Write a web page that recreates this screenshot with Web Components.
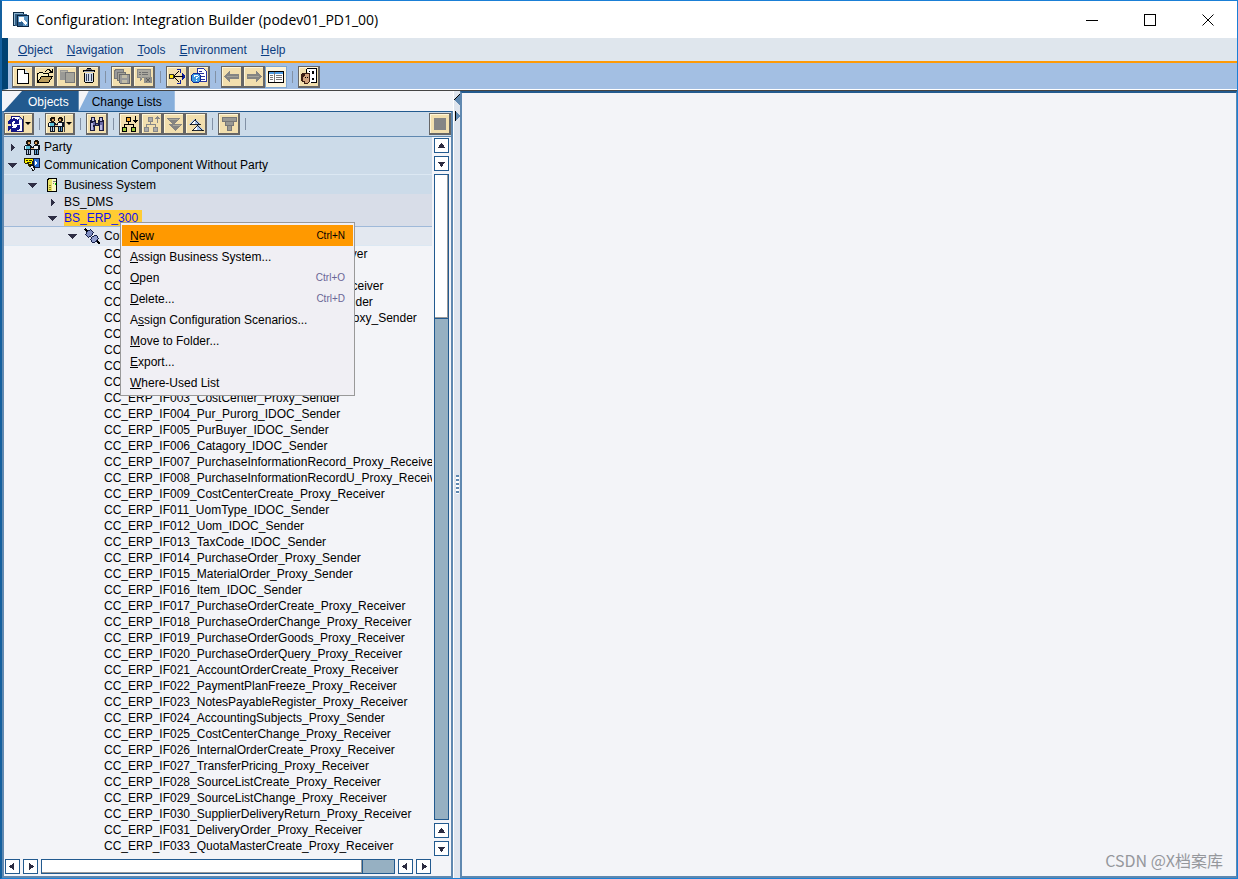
<!DOCTYPE html>
<html lang="en">
<head>
<meta charset="utf-8">
<title>Configuration: Integration Builder (podev01_PD1_00)</title>
<style>
  html, body { margin: 0; height: 100%; }
  body {
    font: 12px/16px "Liberation Sans", Arial, sans-serif;
    color: #000;
    --ink: #225a8f;
    --slate: #5f88b0;
    --pane: #f3f4f8;
    --band: #ccdbe9;
  }
</style>
</head>
<body>
<builder-window></builder-window>

<script>
/* ---------- icons, drawn on a 16 x 16 grid ---------- */
const PEOPLE = `<path d="M3 1h4v4H6v1H3V5H2V2h1zM11 1h3v1h1v3h-1v1h-3V5h-1V2h1z" fill="#1a1208"/>
  <path d="M4 3h2v2H4zM11 3h2v2h-2z" fill="#d79a5c"/>
  <path d="M1 6h6l1 2 2-2h5l1 1v4h-1v5h-5v-5H7v5H2v-5H0V7z" fill="#0c1420"/>
  <path d="M2 7h4v3H2z" fill="#5cc0d8"/><path d="M1 7h1v3H1zM10 7h4v3h-4z" fill="#eef3f6"/><path d="M7 9h3v1H7z" fill="#e0b080"/>
  <path d="M3 11h1v4H3zM5 11h1v4H5z" fill="#b9c8dc"/><path d="M11 11h1v4h-1zM13 11h1v4h-1z" fill="#5c9fd0"/>`;
const ICONS = {
  app: `<path d="M0 0h11v14H0z" fill="#0d2c48"/><path d="M1 1h9v1H1zM1 1h1v12H1z" fill="#8fb4cf"/><path d="M2 2h12v12H2z" fill="#325f86"/><path d="M4 3h12v12H4z" fill="#0b2440"/>
    <path d="M5 4h10v10H5z" fill="#5f97c4"/><path d="M5 10h5v4H5z" fill="#2d5f8e"/><path d="M6 5h5v1L10 7l4 4-2 2-4-4-1 1H6z" fill="#fff"/>`,
  new: `<path d="M2.500 1.500h7l4 4v10h-11z" fill="#fff" stroke="#000"/><path d="M9.500 1.500v4h4" fill="#d8e4f0" stroke="#000"/>`,
  open: `<path d="M.5 14.500v-9h1l1-1h3l1 1h5v3" fill="#f9f0c0" stroke="#000"/><path d="M.5 14.500l4-6h11l-4 6z" fill="#b99b5b" stroke="#000"/>
    <path d="M8 3h1V2h1V1h3v1h1v1h1V1h1v4h-4V4h1V3h-1V2h-2v1H9v1H8z" fill="#000"/>`,
  copy: `<path d="M1 2h8v10H1z" fill="#9a9a96"/><path d="M6.500 4.500h9v10h-9z" fill="#a4a39b" stroke="#777"/><path d="M2 3h6v1H2z" fill="#b8b5a8"/>`,
  trash: `<path d="M6 0h4v1H6zM2 2h12v2H2zM3 5h10v9h-1v1H4v-1H3z" fill="#000"/><path d="M4 5h8v9H4z" fill="#d3dcec"/>
    <path d="M5 6h1v7H5zM7 6h1v7H7zM10 6h1v7h-1z" fill="#33405c"/><path d="M5 1h6v1H5z" fill="#667"/><path d="M3 3h10v1H3z" fill="#8c96aa"/>`,
  saveall: `<path d="M.5 2.500l2-1h7v9h-9z" fill="#999" stroke="#777"/><path d="M3.500 4.500h8v8h-8z" fill="#a5a39a" stroke="#737373"/>
    <path d="M5.500 6.500h10v9h-9l-1-1z" fill="#999" stroke="#6a6a6a"/><path d="M8 7h5v3H8zM8 12h5v3H8z" fill="#c2bca6"/>`,
  activate: `<path d="M1.500 1.500h13v8h-8l-2 3v-3h-3z" fill="#aaa89f" stroke="#8a8a86"/><path d="M3 4h2v1H3zM6 4h6v1H6zM3 6h2v1H3zM6 6h6v1H6z" fill="#6f6f6f"/>
    <path d="M8 9h8v6H8z" fill="#8e8e8a"/><path d="M10 10l4 4m0-4l-4 4" stroke="#5f5f5f"/>`,
  flow: `<path d="M.5 6.500h4v4h-4z" fill="#ffe80a" stroke="#333"/><path d="M5 8.500h9M5 8l5-5M5 9l5 5" stroke="#000" fill="none"/>
    <path d="M8 1h4v4h-1V2H8zM8 16h4v-4h-1v3H8z" fill="#0b1d9b"/><path d="M13 5h1v1h1v1h1v3h-1v1h-1v1h-1V9h1V8h-1z" fill="#0b1d9b"/>`,
  help: `<path d="M6.500.5h6l3 3v10h-9z" fill="#fff" stroke="#2633a0"/><path d="M8 3h3v1H8zM8 5h5v1H8zM10 8h4v1h-4zM10 11h4v1h-4z" fill="#2633a0"/>
    <circle cx="5" cy="10" r="5" fill="#3f9ae0" stroke="#0c2a96"/><path d="M3 9V8l1-1h2l1 1v1L5 10v1M5 12v1" stroke="#fff" fill="none"/>`,
  back: `<path d="M0 8.500L6 2v4h9v5H6v4z" fill="#858583"/><path d="M3 8h11" stroke="#a5a39a"/>`,
  forward: `<path d="M16 8.500L10 2v4H1v5h9v4z" fill="#858583"/><path d="M2 8h11" stroke="#a5a39a"/>`,
  layout: `<path d="M.5 2.500h15v11H.5z" fill="#fff" stroke="#000"/><path d="M1 3h14v2H1z" fill="#4d9ce4"/><path d="M6 3h1v10H6z" fill="#777"/>
    <path d="M2 6h3v1H2zM2 8h3v1H2zM2 10h3v1H2zM8 6h6v1H8zM8 8h6v1H8zM8 10h6v1H8z" fill="#777"/>`,
  person: `<path d="M5.500.5h10v14h-6" fill="#fff" stroke="#000"/><path d="M5.500.5v4" stroke="#000"/><path d="M11 3h2v3h-2zM11 10h2v2h-2zM8 3h1v1H8z" fill="#000"/>
    <path d="M1 5h7l1 1v7l-2 3H3v-2H1l-1-2V7z" fill="#3b1d12"/><path d="M3 8h1V6h4v7l-2 2H4v-2H2V9h1z" fill="#d2a27c"/><path d="M4 9h1v1H4zM6 9h1v1H6z" fill="#000"/>`,
  refresh: `<path d="M4.500.5h8l3 3v12h-11z" fill="#fff" stroke="#15157a"/><path d="M12 1v3h3z" fill="#9db4dc"/>
    <path d="M2 8a5 5 0 0 1 8-3M12 9a5 5 0 0 1-8 4" stroke="#15158a" stroke-width="3" fill="none"/><path d="M12 3v5H6zM1 15v-5h6z" fill="#15158a"/>`,
  people: PEOPLE,
  find: `<path d="M2 1h4v3h1v3h2V4h1V1h4v3h1v11h-5v-5H6v5H1V4h1z" fill="#1b1a3c"/><path d="M3 2h2v3H3zM11 2h2v3h-2zM2 7h2v7H2zM11 9h2v5h-2z" fill="#b9b9e2"/><path d="M4 6h2v3H4zM11 6h3v3h-3zM4 11h1v3H4zM13 9h1v5h-1zM7 8h2v1H7z" fill="#6869a5"/>`,
  expand: `<path d="M4.500 1.500h4v4h-4z" fill="#f5a623" stroke="#000"/><path d="M13 0h1v4h2v1h-1v1h-1v1h-1V6h-1V5h-1V4h2z" fill="#000"/><path d="M6.500 6v2.500M2.500 11V8.500h9V11" stroke="#000" fill="none"/>
    <path d="M.5 11.500h4v4h-4zM9.500 11.500h4v4h-4z" fill="#9ccf3d" stroke="#000"/>`,
  collapse: `<path d="M4.500 1.500h4v4h-4z" fill="#aaa" stroke="#888"/><path d="M13 7h1V3h2V2h-1V1h-1V0h-1v1h-1v1h-1v1h2z" fill="#888"/><path d="M6.500 6v2.500M2.500 11V8.500h9V11" stroke="#888" fill="none"/>
    <path d="M.5 11.500h4v4h-4zM9.500 11.500h4v4h-4z" fill="#aaa" stroke="#888"/>`,
  down: `<path d="M1 2h13L7.500 9zM3 8h13L9.500 15z" fill="#858583"/><path d="M3 3h9M7 9h7" stroke="#aaa89c"/>`,
  up: `<path d="M1.500 8.500h11L7 2.500zM3.500 14.500h12L9.500 8.500z" fill="#a9c5ee" stroke="#000" stroke-width=".8"/><path d="M7 4L3 8h4zM9 10l-4 4h4z" fill="#fff"/>`,
  filter: `<path d="M1.500 1.500h14v4h-14zM4.500 5.500h8v4h-8zM6.500 9.500h4v5h-4z" fill="#999994" stroke="#777"/>`,
  stop: `<path d="M2 2h12v12H2z" fill="#858585"/>`,
  channel: `<path d="M0 1h9v7H6v2H5V9H4V7H1V6H0z" fill="#2a2600"/><path d="M1 2h8v5H5L4 6H1z" fill="#fbf200"/><path d="M2 3h2v1H2zM5 3h3v1H5zM3 5h4v1H3z" fill="#2a2600"/>
    <path d="M9 1h7v10h-4l-2-1H8V4h1z" fill="#101a40"/><path d="M10 2h5v8h-5z" fill="#2d6fd0"/><path d="M11 4l3 2-3 2z" fill="#fff"/>
    <path d="M6 8h3l2 2v3h-1v1H8v-2H7z" fill="#111"/><path d="M7 9h2v2h1v2H9v-1H8z" fill="#e8ecf8"/>`,
  system: `<path d="M3.500 2.500l2-1h7v13h-9z" fill="#e9e36c" stroke="#000"/><path d="M8 2h4v12H8z" fill="#fbf9c4"/><path d="M9 4h3v1H9zM9 6h1v1H9z" fill="#777"/><path d="M11 6h1v2h-1z" fill="#0c0"/><path d="M5 8h2v1H5zM5 10h2v1H5zM5 12h2v1H5z" fill="#8a8420"/>`,
  plug: `<path d="M1 1l3 3M12 12l4 4" stroke="#000" stroke-width="1.500"/><ellipse cx="5.500" cy="5.500" rx="4" ry="3" transform="rotate(-45 5.500 5.500)" fill="#7f8dc0" stroke="#15204a"/>
    <ellipse cx="10.500" cy="11" rx="4" ry="3" transform="rotate(-45 10.500 11)" fill="#93a0cf" stroke="#15204a"/><path d="M7 9l3-3" stroke="#fff"/>`,
  min: `<path d="M2 8h12v1H2z" fill="#000"/>`,
  max: `<path d="M2.500 2.500h11v11h-11z" fill="none" stroke="#000"/>`,
  close: `<path d="M2.500 2.500l11 11m0-11l-11 11" fill="none" stroke="#000" shape-rendering="auto"/>`,
  aup: `<path d="M8 5l5 6H3z" fill="#2b2b40"/>`,
  adown: `<path d="M8 12L3 6h10z" fill="#2b2b40"/>`,
  aleft: `<path d="M4 8l6-5v10z" fill="#2b2b40"/>`,
  aright: `<path d="M12 8L6 3v10z" fill="#2b2b40"/>`,
  topen: `<path d="M4 6h9L8.500 11z" fill="#2e2e44"/>`,
  tclosed: `<path d="M7 4l4 4.500L7 13z" fill="#2e2e44"/>`,
};

const define = (name, html, setup) =>
  customElements.define(name, class extends HTMLElement {
    constructor() {
      super();
      this.attachShadow({ mode: "open" });
    }
    connectedCallback() {
      this.shadowRoot.innerHTML = typeof html === "function" ? html(this) : html;
      if (setup) setup(this);
    }
  });

define("app-icon", el => `
  <style>:host{display:block;flex:none;width:16px;height:16px} svg{display:block;width:100%;height:100%;shape-rendering:crispEdges}</style>
  <svg viewBox="0 0 16 16" fill="none" aria-hidden="true">${ICONS[el.getAttribute("name")]}</svg>`);

/* Raised sand-coloured toolbar button; "menu" adds a drop-down arrow, "on" shows it pressed. */
define("tool-button", el => `
  <style>
    :host{display:block;flex:none}
    button{box-sizing:border-box;display:flex;align-items:center;height:22px;padding:0 1px 0 2px;margin:0;
      border:2px solid #666;border-width:1px 2px 2px 1px;background:#f2dfae;box-shadow:inset 1px 1px #fff6d8}
    :host([on]) button{border:1px solid #7ea6d0;padding:0 2px;background:#fbf3dc}
    i{width:8px;height:16px;display:flex;align-items:center;justify-content:center;border-left:1px solid #444;box-sizing:border-box}
    i::after{content:"";border:3px solid transparent;border-top-color:#000;border-bottom:0}
  </style>
  <button type="button" aria-label="${el.getAttribute("label")}"><app-icon name="${el.getAttribute("icon")}"></app-icon>${el.hasAttribute("menu") ? "<i></i>" : ""}</button>`);
define("tool-gap", `<style>:host{display:flex;flex:none;width:11px;justify-content:center} i{width:1px;height:12px;background:#8291a5}</style><i></i>`);
define("tool-strip", `<style>:host{display:flex;align-items:center}</style><slot></slot>`);

define("title-bar", `
  <style>
    :host{display:flex;align-items:center;height:37px;padding:0 21px 0 11px;background:#fff;gap:7px}
    h1{flex:1;margin:0;font:14px/20px "Open Sans","Noto Sans",sans-serif;white-space:nowrap}
    nav{display:flex;gap:42px} button{display:block;border:0;background:none;padding:0}
  </style>
  <app-icon name="app"></app-icon><h1><slot></slot></h1>
  <nav><button aria-label="Minimize"><app-icon name="min"></app-icon></button><button aria-label="Maximize"><app-icon name="max"></app-icon></button><button aria-label="Close"><app-icon name="close"></app-icon></button></nav>`);

define("menu-bar", `
  <style>:host{display:flex;align-items:center;gap:14px;height:23px;padding-left:10px;background:#dfe6ed;color:#0b3c80}</style><slot></slot>`);
define("menu-title", `
  <style>button{font:inherit;color:inherit;border:0;background:none;padding:0;display:block}</style><button type="button"><slot></slot></button>`);

define("pane-tab", el => `
  <style>
    :host{display:block;height:20px;--cut:10px;background:#86aedb;clip-path:polygon(var(--cut) 0,100% 0,100% 100%,0 100%)}
    :host([active]){--cut:18px;background:var(--ink);color:#fff}
    button{display:block;font:inherit;color:inherit;border:0;background:none;height:20px;padding:2px 13px 0}
    :host([active]) button{padding:2px 10px 0 24px}
  </style><button type="button" role="tab" aria-selected="${el.hasAttribute("active")}"><slot></slot></button>`);

/* One tree line. "level" sets the indent, "state" the twisty, "tone" the band colour. */
define("tree-row", el => {
  const leaf = !el.hasAttribute("state");
  const level = +(el.getAttribute("level") || 5);
  return `
  <style>
    :host{display:flex;align-items:center;gap:4px;box-sizing:border-box;height:16px;padding-left:${leaf ? 100 : level * 20}px;white-space:nowrap}
    :host([tone=band]){height:19px;background:var(--band)}
    :host([tone=grey]){background:#d8dde8}
    :host([tone=pale]){height:19px;background:#e3e8f0}
    :host([rule=light]){border-bottom:1px solid #dce8f3}
    :host([rule=blue]){border-bottom:1px solid #9fb9d9;height:17px}
    :host([selected]) span{background:#fc3;color:#11e;padding-right:4px}
  </style>
  ${leaf ? "" : `<app-icon name="${el.getAttribute("state") === "open" ? "topen" : "tclosed"}"></app-icon>`}
  ${el.hasAttribute("icon") ? `<app-icon name="${el.getAttribute("icon")}"></app-icon>` : ""}
  <span><slot></slot></span>`;
});

define("scroll-bar", el => {
  const v = el.hasAttribute("vertical");
  const [a, b] = v ? ["aup", "adown"] : ["aleft", "aright"];
  const btn = (n, l) => `<button type="button" aria-label="${l}"><app-icon name="${n}"></app-icon></button>`;
  const pair = btn(a, "Scroll back") + btn(b, "Scroll forward");
  return `
  <style>
    :host{display:flex;gap:3px;padding:2px 1px;flex-direction:${v ? "column" : "row"}}
    :host([vertical]){padding:1px 2px}
    button{flex:none;box-sizing:border-box;width:15px;height:15px;padding:0;border:1px solid var(--ink);background:#fff;display:grid;place-items:center;overflow:hidden}
    app-icon{width:13px;height:13px}
    div{flex:1;box-sizing:border-box;display:flex;flex-direction:inherit;border:1px solid var(--ink);background:#96b0c2}
    i{flex:${v ? 144 : 322} 1 0;background:#fff;box-shadow:inset -1px -1px #999}
    b{flex:${v ? 502 : 31} 1 0;border:0 solid var(--ink);border-${v ? "top" : "left"}-width:1px}
  </style>${pair}<div><i></i><b></b></div>${pair}`;
});

define("context-menu", `
  <style>:host{display:block;box-sizing:border-box;width:235px;padding:2px 1px;background:#f0eff4;border:1px solid #999}</style><slot></slot>`);
define("menu-item", el => `
  <style>
    :host{display:block}
    button{display:flex;box-sizing:border-box;width:100%;height:21px;align-items:center;justify-content:space-between;padding:0 8px;border:0;background:none;font:inherit;color:#000}
    small{font-size:10px;color:#6a6696}
    :host([active]) button{background:#f90} :host([active]) small{color:#000}
  </style><button type="button" role="menuitem"><span><slot></slot></span><small>${el.getAttribute("keys") || ""}</small></button>`);

const CHANNELS = `IF001_MaterialMaster_Proxy_Receiver IF001_Material_IDOC_Sender IF002_PurchaseRequest_Proxy_Receiver
IF002_MaterialRequests_Proxy_Sender IF002_PurchaseRequestChange_Proxy_Sender IF002_Vendor_IDOC_Sender IF002_Plant_IDOC_Sender
IF003_Company_IDOC_Sender IF003_Account_IDOC_Sender
IF003_CostCenter_Proxy_Sender IF004_Pur_Purorg_IDOC_Sender IF005_PurBuyer_IDOC_Sender IF006_Catagory_IDOC_Sender
IF007_PurchaseInformationRecord_Proxy_Receiver IF008_PurchaseInformationRecordU_Proxy_Receiver IF009_CostCenterCreate_Proxy_Receiver
IF011_UomType_IDOC_Sender IF012_Uom_IDOC_Sender IF013_TaxCode_IDOC_Sender IF014_PurchaseOrder_Proxy_Sender
IF015_MaterialOrder_Proxy_Sender IF016_Item_IDOC_Sender IF017_PurchaseOrderCreate_Proxy_Receiver IF018_PurchaseOrderChange_Proxy_Receiver
IF019_PurchaseOrderGoods_Proxy_Receiver IF020_PurchaseOrderQuery_Proxy_Receiver IF021_AccountOrderCreate_Proxy_Receiver
IF022_PaymentPlanFreeze_Proxy_Receiver IF023_NotesPayableRegister_Proxy_Receiver IF024_AccountingSubjects_Proxy_Sender
IF025_CostCenterChange_Proxy_Receiver IF026_InternalOrderCreate_Proxy_Receiver IF027_TransferPricing_Proxy_Receiver
IF028_SourceListCreate_Proxy_Receiver IF029_SourceListChange_Proxy_Receiver IF030_SupplierDeliveryReturn_Proxy_Receiver
IF031_DeliveryOrder_Proxy_Receiver IF033_QuotaMasterCreate_Proxy_Receiver`.split(/\s+/);

define("object-pane", () => `
  <style>
    :host{display:flex;flex-direction:column;min-height:0;min-width:0}
    .tabs{display:flex;height:20px;padding-left:2px}
    .box{flex:1;min-height:0;display:flex;flex-direction:column;border:2px solid var(--slate);border-top:1px solid var(--ink);background:var(--pane);position:relative}
    tool-strip{height:24px;background:var(--band);border-bottom:1px solid var(--slate)}
    .end{margin-left:auto}
    .scroll{flex:1;min-height:0;display:grid;grid-template:minmax(0,1fr) auto / minmax(0,1fr) 19px}
    .tree{overflow:hidden}
    context-menu{position:absolute;left:116px;top:110px}
  </style>
  <div class="tabs" role="tablist"><pane-tab active>Objects</pane-tab><pane-tab>Change Lists</pane-tab></div>
  <div class="box">
    <tool-strip>
      <tool-button icon="refresh" label="Refresh" menu></tool-button><tool-gap></tool-gap>
      <tool-button icon="people" label="Object type" menu></tool-button><tool-gap></tool-gap>
      <tool-button icon="find" label="Find"></tool-button><tool-gap></tool-gap>
      <tool-button icon="expand" label="Expand subtree"></tool-button><tool-button icon="collapse" label="Collapse subtree"></tool-button><tool-button icon="down" label="Expand all"></tool-button><tool-button icon="up" label="Collapse all"></tool-button><tool-gap></tool-gap>
      <tool-button icon="filter" label="Filter"></tool-button><tool-gap></tool-gap>
      <tool-button class="end" icon="stop" label="Stop"></tool-button>
    </tool-strip>
    <div class="scroll">
      <div class="tree" role="tree">
        <tree-row level="0" state="closed" icon="people" tone="band">Party</tree-row>
        <tree-row level="0" state="open" icon="channel" tone="band" rule="light">Communication Component Without Party</tree-row>
        <tree-row level="1" state="open" icon="system" tone="band">Business System</tree-row>
        <tree-row level="2" state="closed" tone="grey">BS_DMS</tree-row>
        <tree-row level="2" state="open" tone="grey" rule="blue" selected>BS_ERP_300</tree-row>
        <tree-row level="3" state="open" icon="plug" tone="pale" rule="light">Communication Channel</tree-row>
        ${CHANNELS.map(c => `<tree-row>CC_ERP_${c}</tree-row>`).join("")}
      </div>
      <scroll-bar vertical></scroll-bar>
      <scroll-bar></scroll-bar>
    </div>
    <context-menu role="menu">
      <menu-item active keys="Ctrl+N"><u>N</u>ew</menu-item>
      <menu-item><u>A</u>ssign Business System...</menu-item>
      <menu-item keys="Ctrl+O"><u>O</u>pen</menu-item>
      <menu-item keys="Ctrl+D"><u>D</u>elete...</menu-item>
      <menu-item>A<u>s</u>sign Configuration Scenarios...</menu-item>
      <menu-item><u>M</u>ove to Folder...</menu-item>
      <menu-item><u>E</u>xport...</menu-item>
      <menu-item><u>W</u>here-Used List</menu-item>
    </context-menu>
  </div>`);

define("split-handle", `
  <style>
    :host{display:flex;flex-direction:column;align-items:center;justify-content:space-between;background:#dfe5ee;border-left:1px solid #fff;box-sizing:border-box}
    svg{display:block;width:7px;height:32px;shape-rendering:crispEdges}
    i{width:3px;height:19px;background:repeating-linear-gradient(var(--slate) 0 2px,#fff 2px 4px)}
    span{height:32px}
  </style>
  <svg viewBox="0 0 7 32"><path d="M6 3v12L0 9z" fill="#5f88b0"/><path d="M6 3L0 9" stroke="#000"/><path d="M1 20l5 5-5 5z" fill="#5f88b0"/><path d="M1 20v10" stroke="#000"/></svg>
  <i></i><span></span>`);

define("work-area", `
  <style>
    :host{display:flex;align-items:flex-end;justify-content:flex-end;border:2px solid var(--slate);border-top-color:var(--ink);border-right-width:1px;background:var(--pane)}
    p{margin:0;padding:0 13px 4px 0;font:16px/24px "Noto Sans CJK SC",sans-serif;color:#95979c}
  </style><p><slot></slot></p>`);

define("builder-window", `
  <style>
    :host{display:flex;flex-direction:column;box-sizing:border-box;height:100vh;border:1px solid #1a7fd6;border-left:2px solid #14609f;background:var(--pane)}
    .head{border-left:6px solid #004272}
    menu-bar{border-bottom:2px solid #ff9a05}
    .main{height:26px;padding:1px 0 0 4px;box-sizing:border-box;background:#a3bfe3}
    .body{flex:1;min-height:0;display:grid;grid-template-columns:451px 7px minmax(0,1fr);border-top:1px solid #444}
    .head{border-bottom:1px solid #fff}
  </style>
  <title-bar>Configuration: Integration Builder (podev01_PD1_00)</title-bar>
  <div class="head">
    <menu-bar><menu-title><u>O</u>bject</menu-title><menu-title><u>N</u>avigation</menu-title><menu-title><u>T</u>ools</menu-title><menu-title><u>E</u>nvironment</menu-title><menu-title><u>H</u>elp</menu-title></menu-bar>
    <tool-strip class="main">
      <tool-button icon="new" label="New"></tool-button><tool-button icon="open" label="Open"></tool-button><tool-button icon="copy" label="Copy"></tool-button><tool-button icon="trash" label="Delete"></tool-button><tool-gap></tool-gap>
      <tool-button icon="saveall" label="Save all"></tool-button><tool-button icon="activate" label="Activate"></tool-button><tool-gap></tool-gap>
      <tool-button icon="flow" label="Where used"></tool-button><tool-button icon="help" label="Help"></tool-button><tool-gap></tool-gap>
      <tool-button icon="back" label="Back"></tool-button><tool-button icon="forward" label="Forward"></tool-button><tool-button icon="layout" label="Navigation area" on></tool-button><tool-gap></tool-gap>
      <tool-button icon="person" label="User settings"></tool-button>
    </tool-strip>
  </div>
  <div class="body"><object-pane></object-pane><split-handle></split-handle><work-area>CSDN @X档案库</work-area></div>`);
</script>
</body>
</html>
